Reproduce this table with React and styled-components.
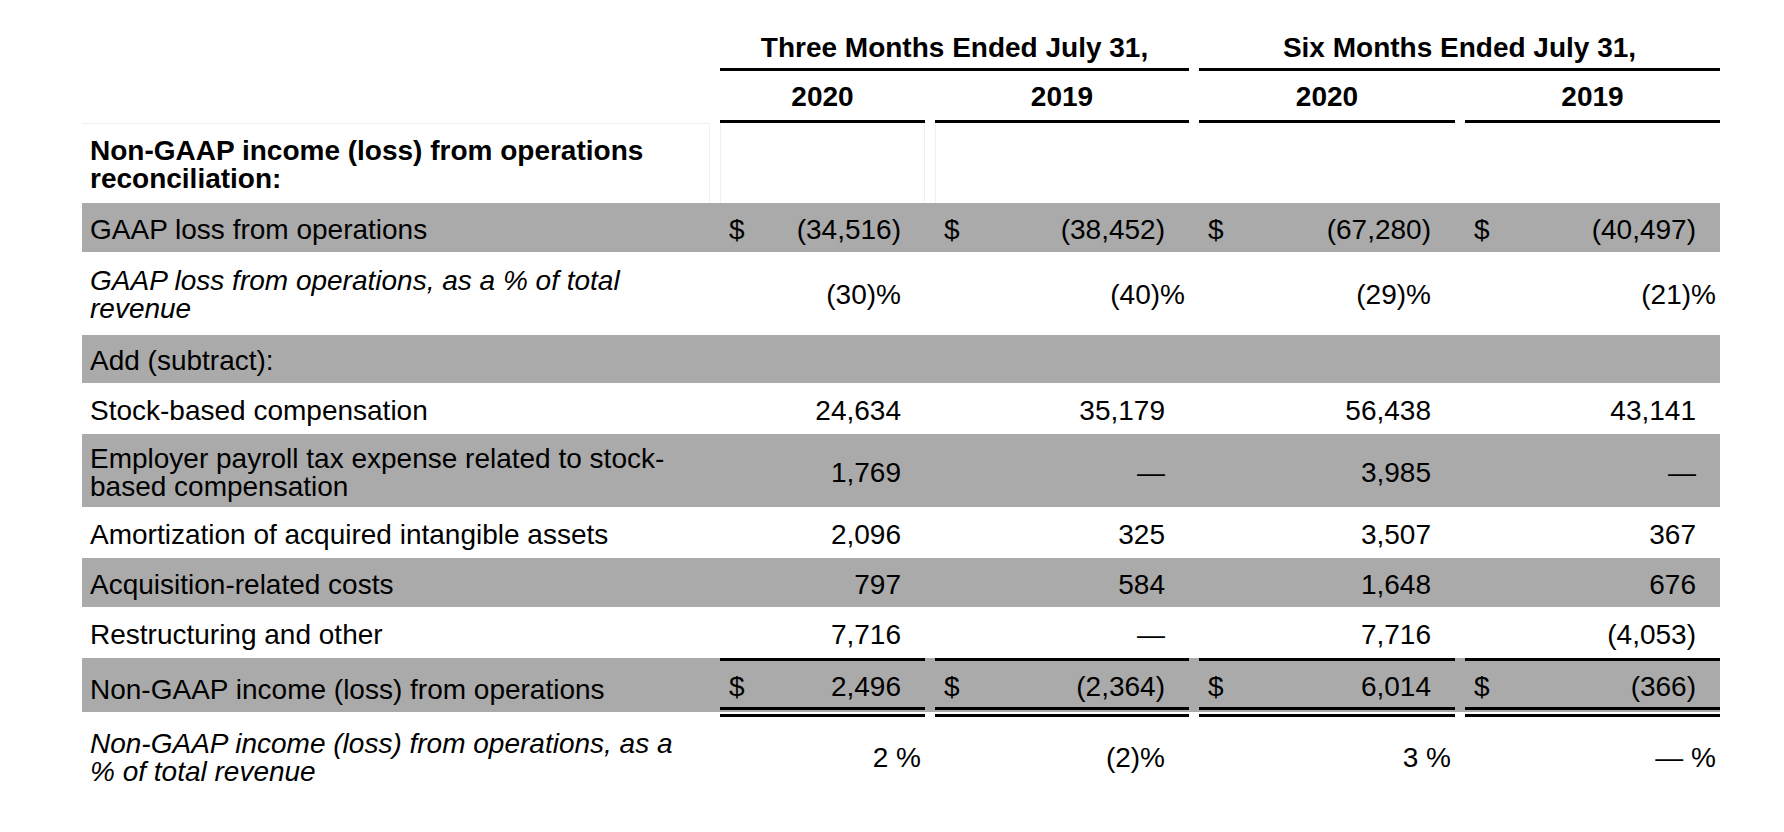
import React from 'react';
import styled, { createGlobalStyle } from 'styled-components';

// Non-GAAP reconciliation table, laid out as a grid of fixed columns
// label | three months 2020 | 2019 | six months 2020 | 2019

const GlobalStyle = createGlobalStyle`
  html, body { margin: 0; padding: 0; background: #fff; }
  body { font-family: "Liberation Sans", Arial, sans-serif; color: #000; }
`;

const SHADE = '#aaaaaa';
const FAINT = '#f0f0f0';

const Page = styled.div`
  padding: 34px 0 40px 82px;
`;

const Table = styled.div`
  width: 1638px;
  font-size: 28px;
  line-height: 28px;
`;

const Grid = styled.div`
  display: grid;
  grid-template-columns: 628px 205px 254px 256px 255px;
  column-gap: 10px;
`;

// --- header ---
const GroupHead = styled.div`
  grid-column: span 2;
  font-weight: 700;
  text-align: center;
  padding-bottom: 6px;
  border-bottom: 3px solid #000;
`;

const YearHead = styled.div`
  font-weight: 700;
  text-align: center;
  padding: 12px 0 9px;
  border-bottom: 3px solid #000;
`;

// --- body rows ---
const Row = styled(Grid)`
  height: ${({ $h }) => $h}px;
  box-sizing: border-box;
  background: ${({ $shade, $total }) =>
    $total
      ? `linear-gradient(to bottom, ${SHADE} 0, ${SHADE} calc(100% - 5px), transparent calc(100% - 5px))`
      : $shade ? SHADE : 'transparent'};
`;

const Label = styled.div`
  display: flex;
  align-items: center;
  box-sizing: border-box;
  padding: ${({ $tight }) => ($tight ? '3px' : '5px')} 12px 0 8px;
  font-weight: ${({ $bold }) => ($bold ? 700 : 400)};
  font-style: ${({ $italic }) => ($italic ? 'italic' : 'normal')};
  border-top: ${({ $faint }) => ($faint ? `1px solid ${FAINT}` : 'none')};
  border-right: ${({ $faint }) => ($faint ? `1px solid ${FAINT}` : 'none')};
`;

const Blank = styled.div`
  border-left: ${({ $l }) => ($l ? `1px solid ${FAINT}` : 'none')};
  border-right: ${({ $r }) => ($r ? `1px solid ${FAINT}` : 'none')};
`;

const Amount = styled.div`
  display: flex;
  align-items: center;
  justify-content: space-between;
  box-sizing: border-box;
  padding: ${({ $total, $tight }) => ($total ? '6px' : $tight ? '3px' : '5px')} ${({ $hang }) => ($hang ? '4px' : '24px')} 0 9px;
  white-space: nowrap;
  border-top: ${({ $total }) => ($total ? '3px solid #000' : 'none')};
  border-bottom: ${({ $total }) => ($total ? '10px double #000' : 'none')};
`;

const Dollar = styled.span`
  flex: none;
`;

const Figure = styled.span`
  margin-left: auto;
`;

const v = (text, hang = false) => ({ text, hang });

// two-line rows (tight) already sit where the reference has them
const rows = [
  { label: 'GAAP loss from operations', shade: true, h: 49, dollar: true,
    vals: [v('(34,516)'), v('(38,452)'), v('(67,280)'), v('(40,497)')] },
  { label: 'GAAP loss from operations, as a % of total revenue', italic: true, tight: true, h: 83,
    vals: [v('(30)%'), v('(40)%', true), v('(29)%'), v('(21)%', true)] },
  { label: 'Add (subtract):', shade: true, tight: true, h: 48, vals: [] },
  { label: 'Stock-based compensation', h: 51,
    vals: [v('24,634'), v('35,179'), v('56,438'), v('43,141')] },
  { label: 'Employer payroll tax expense related to stock-based compensation', shade: true, h: 73,
    vals: [v('1,769'), v('—'), v('3,985'), v('—')] },
  { label: 'Amortization of acquired intangible assets', h: 51,
    vals: [v('2,096'), v('325'), v('3,507'), v('367')] },
  { label: 'Acquisition-related costs', shade: true, h: 49,
    vals: [v('797'), v('584'), v('1,648'), v('676')] },
  { label: 'Restructuring and other', h: 51,
    vals: [v('7,716'), v('—'), v('7,716'), v('(4,053)')] },
  { label: 'Non-GAAP income (loss) from operations', total: true, h: 59, dollar: true,
    vals: [v('2,496'), v('(2,364)'), v('6,014'), v('(366)')] },
  { label: 'Non-GAAP income (loss) from operations, as a % of total revenue', italic: true, tight: true, h: 78,
    vals: [v('2 %', true), v('(2)%'), v('3 %', true), v('— %', true)] },
];

const App = () => (
  <>
    <GlobalStyle />
    <Page>
      <Table>
        <Grid>
          <div />
          <GroupHead>Three Months Ended July 31,</GroupHead>
          <GroupHead>Six Months Ended July 31,</GroupHead>
        </Grid>
        <Grid>
          <div />
          <YearHead>2020</YearHead>
          <YearHead>2019</YearHead>
          <YearHead>2020</YearHead>
          <YearHead>2019</YearHead>
        </Grid>

        <Row $h={80}>
          <Label $bold $faint $tight>Non-GAAP income (loss) from operations reconciliation:</Label>
          <Blank $l $r />
          <Blank $l />
          <Blank />
          <Blank />
        </Row>

        {rows.map((r) => (
          <Row key={r.label} $h={r.h} $shade={r.shade} $total={r.total}>
            <Label $italic={r.italic} $tight={r.tight}>{r.label}</Label>
            {[0, 1, 2, 3].map((i) => {
              const cell = r.vals[i];
              if (!cell) return <Blank key={i} />;
              return (
                <Amount key={i} $hang={cell.hang} $total={r.total} $tight={r.tight}>
                  {r.dollar && <Dollar>$</Dollar>}
                  <Figure>{cell.text}</Figure>
                </Amount>
              );
            })}
          </Row>
        ))}
      </Table>
    </Page>
  </>
);

export default App;
